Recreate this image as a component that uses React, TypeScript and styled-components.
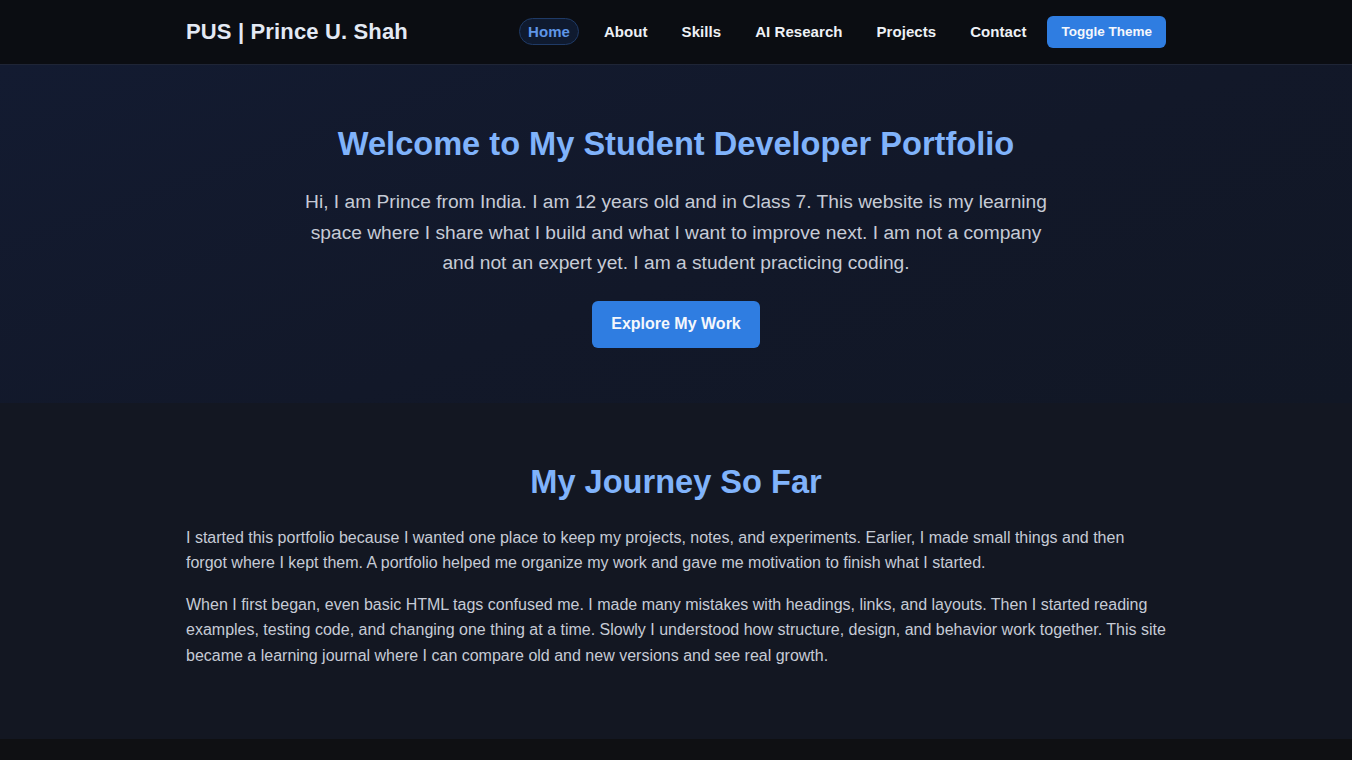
import React from "react";
import styled, { createGlobalStyle } from "styled-components";

const Global = createGlobalStyle`
  * { box-sizing: border-box; }
  html, body { margin: 0; padding: 0; background: #0f1013; }
  body { font-family: "Liberation Sans", Arial, sans-serif; color: #c9cdd6; }
`;

const Header = styled.header`
  background: #0b0d12;
  border-bottom: 1px solid #1f2536;
  height: 65px;
`;

const Container = styled.div`
  width: 980px;
  margin: 0 auto;
`;

const HeaderInner = styled(Container)`
  height: 63px;
  display: flex;
  align-items: center;
  justify-content: space-between;
`;

const Logo = styled.div`
  font-size: 22px;
  letter-spacing: 0.15px;
  font-weight: 700;
  color: #e3e9f4;
`;

const Nav = styled.nav`
  display: flex;
  align-items: center;
  gap: 16px;
`;

const NavLink = styled.a<{ $active?: boolean }>`
  font-size: 15px;
  letter-spacing: 0.06px;
  font-weight: 700;
  line-height: 17px;
  padding: 4px 8px;
  border-radius: 999px;
  text-decoration: none;
  border: 1px solid ${(p) => (p.$active ? "#1f3a66" : "transparent")};
  background: ${(p) => (p.$active ? "#0f1a2f" : "transparent")};
  color: ${(p) => (p.$active ? "#5e95e6" : "#eef1f6")};
`;

const ToggleButton = styled.button`
  margin-left: -4px;
  font-family: inherit;
  font-size: 13.5px;
  font-weight: 700;
  color: #f4f7fc;
  background: #2f7de1;
  border: none;
  border-radius: 6px;
  padding: 0 14px;
  height: 32px;
`;

const Hero = styled.section`
  background: linear-gradient(160deg, #131b31 0%, #121829 55%, #111725 100%);
  padding: 60px 0 55px;
  text-align: center;
`;

const HeroTitle = styled.h1`
  margin: 0 0 24px;
  font-size: 32.6px;
  line-height: 38px;
  font-weight: 700;
  color: #80b3fb;
`;

const HeroText = styled.p`
  margin: 0 auto 22px;
  max-width: 760px;
  font-size: 19.2px;
  line-height: 30.5px;
  color: #c6cbd6;
`;

const PrimaryButton = styled.button`
  font-family: inherit;
  font-size: 16px;
  font-weight: 700;
  color: #f4f7fc;
  background: #2f7de1;
  border: none;
  border-radius: 6px;
  width: 168px;
  height: 47px;
`;

const Journey = styled.section`
  background: #131722;
  padding: 60px 0 55px;
`;

const SectionTitle = styled.h2`
  margin: 0 0 24px;
  text-align: center;
  font-size: 32.6px;
  line-height: 38px;
  font-weight: 700;
  color: #80b3fb;
`;

const Para = styled.p`
  margin: 0 0 16px;
  font-size: 16px;
  line-height: 25.6px;
  color: #c6cbd6;
`;

const Footer = styled.footer`
  height: 30px;
  background: #0f1013;
`;

export default function App() {
  const links = ["Home", "About", "Skills", "AI Research", "Projects", "Contact"];
  return (
    <>
      <Global />
      <Header>
        <HeaderInner>
          <Logo>PUS | Prince U. Shah</Logo>
          <Nav>
            {links.map((l) => (
              <NavLink key={l} href="#" $active={l === "Home"}>
                {l}
              </NavLink>
            ))}
            <ToggleButton>Toggle Theme</ToggleButton>
          </Nav>
        </HeaderInner>
      </Header>
      <Hero>
        <Container>
          <HeroTitle>Welcome to My Student Developer Portfolio</HeroTitle>
          <HeroText>
            Hi, I am Prince from India. I am 12 years old and in Class 7. This website is my learning
            space where I share what I build and what I want to improve next. I am not a company and
            not an expert yet. I am a student practicing coding.
          </HeroText>
          <PrimaryButton>Explore My Work</PrimaryButton>
        </Container>
      </Hero>
      <Journey>
        <Container>
          <SectionTitle>My Journey So Far</SectionTitle>
          <Para>
            I started this portfolio because I wanted one place to keep my projects, notes, and
            experiments. Earlier, I made small things and then forgot where I kept them. A portfolio
            helped me organize my work and gave me motivation to finish what I started.
          </Para>
          <Para>
            When I first began, even basic HTML tags confused me. I made many mistakes with headings,
            links, and layouts. Then I started reading examples, testing code, and changing one thing at
            a time. Slowly I understood how structure, design, and behavior work together. This site
            became a learning journal where I can compare old and new versions and see real growth.
          </Para>
        </Container>
      </Journey>
      <Footer />
    </>
  );
}
